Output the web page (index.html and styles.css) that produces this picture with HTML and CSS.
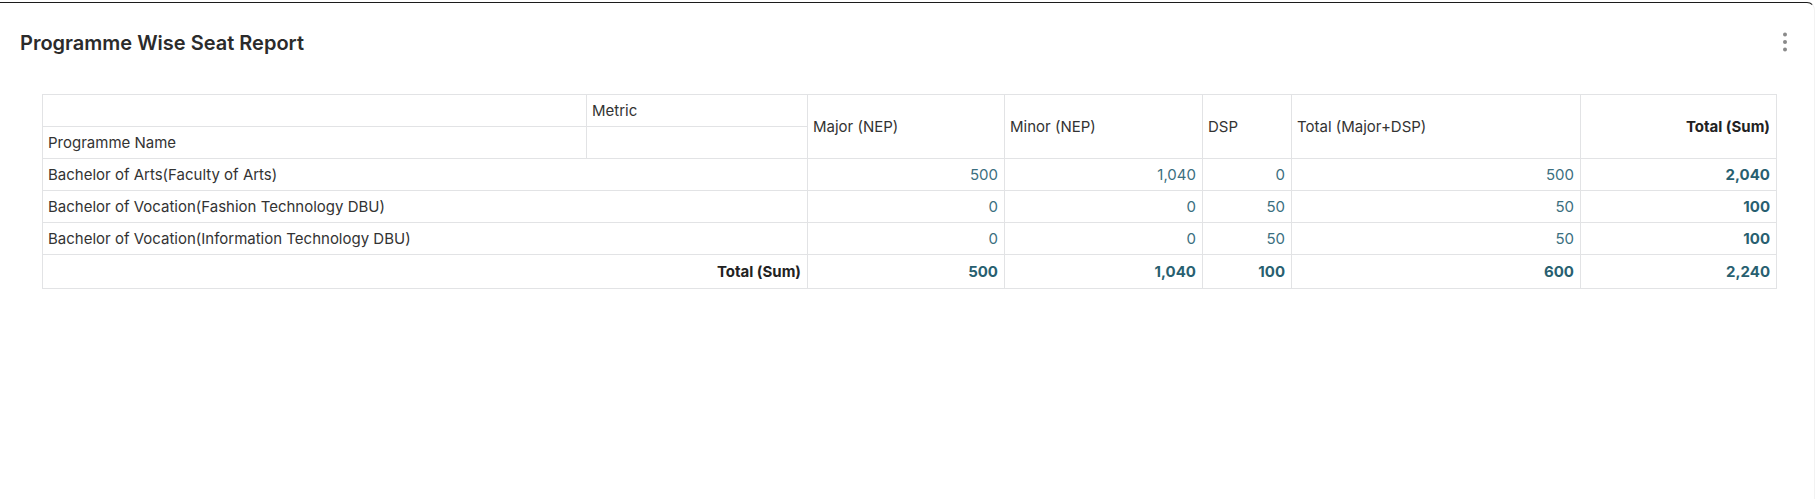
FILE: index.html
```html
<!DOCTYPE html>
<html lang="en">
<head>
<meta charset="utf-8">
<title>Programme Wise Seat Report</title>
<link rel="stylesheet" href="styles.css">
</head>
<body>
<div class="card">
  <div class="card-header">
    <h2 class="card-title">Programme Wise Seat Report</h2>
    <button class="menu-btn" aria-label="More options">
      <svg width="6" height="20" viewBox="0 0 6 20"><circle cx="3" cy="2.5" r="2" fill="#8a8a8a"/><circle cx="3" cy="10" r="2" fill="#8a8a8a"/><circle cx="3" cy="17.5" r="2" fill="#8a8a8a"/></svg>
    </button>
  </div>
  <div class="table-wrap">
    <table class="pivot">
      <colgroup>
        <col class="c-name"><col class="c-metric"><col class="c-major"><col class="c-minor"><col class="c-dsp"><col class="c-tmd"><col class="c-sum">
      </colgroup>
      <thead>
        <tr class="hrow">
          <th class="blank"></th>
          <th class="lbl">Metric</th>
          <th class="lbl" rowspan="2">Major (NEP)</th>
          <th class="lbl" rowspan="2">Minor (NEP)</th>
          <th class="lbl" rowspan="2">DSP</th>
          <th class="lbl" rowspan="2">Total (Major+DSP)</th>
          <th class="lbl sum-head" rowspan="2">Total (Sum)</th>
        </tr>
        <tr class="hrow">
          <th class="lbl">Programme Name</th>
          <th class="blank"></th>
        </tr>
      </thead>
      <tbody>
        <tr>
          <td class="name" colspan="2">Bachelor of Arts(Faculty of Arts)</td>
          <td class="num">500</td><td class="num">1,040</td><td class="num">0</td><td class="num">500</td><td class="num strong">2,040</td>
        </tr>
        <tr>
          <td class="name" colspan="2">Bachelor of Vocation(Fashion Technology DBU)</td>
          <td class="num">0</td><td class="num">0</td><td class="num">50</td><td class="num">50</td><td class="num strong">100</td>
        </tr>
        <tr>
          <td class="name" colspan="2">Bachelor of Vocation(Information Technology DBU)</td>
          <td class="num">0</td><td class="num">0</td><td class="num">50</td><td class="num">50</td><td class="num strong">100</td>
        </tr>
        <tr class="total-row">
          <td class="total-label" colspan="2">Total (Sum)</td>
          <td class="num strong">500</td><td class="num strong">1,040</td><td class="num strong">100</td><td class="num strong">600</td><td class="num strong">2,240</td>
        </tr>
      </tbody>
    </table>
  </div>
</div>
</body>
</html>
```

FILE: styles.css
```css
html, body {
  margin: 0;
  padding: 0;
  background: #ffffff;
}

body {
  font-family: Inter, "Noto Sans", "Liberation Sans", sans-serif;
  color: #333333;
}

.card {
  margin-top: 2px;
  height: 497px;
  box-sizing: border-box;
  border-top: 1px solid #1c1c1c;
  border-right: 1px solid #f2f2f2;
  border-top-right-radius: 8px;
}

.card-header {
  display: flex;
  align-items: center;
  justify-content: space-between;
  padding: 26px 26px 0 20px;
}

.card-title {
  margin: 0;
  font-size: 20px;
  line-height: 28px;
  font-weight: 600;
  color: #2b2b2b;
}

.menu-btn {
  border: 0;
  background: none;
  padding: 0;
  margin-top: -2px;
  display: flex;
  cursor: pointer;
}

.table-wrap {
  margin: 37px 39px 0 42px;
}

.pivot {
  width: 100%;
  table-layout: fixed;
  border-collapse: collapse;
  font-size: 15px;
  line-height: 18px;
}

.c-name { width: 544px; }
.c-metric { width: 221px; }
.c-major { width: 197px; }
.c-minor { width: 198px; }
.c-dsp { width: 89px; }
.c-tmd { width: 289px; }
.c-sum { width: 196px; }

.pivot th,
.pivot td {
  border: 1px solid #e2e3e5;
  padding: 0 6px 0 5px;
  height: 32px;
  box-sizing: border-box;
  vertical-align: middle;
  white-space: nowrap;
}

.pivot th {
  font-weight: 400;
  text-align: left;
  color: #333333;
}

.pivot th.sum-head {
  text-align: right;
  font-weight: 700;
  color: #222222;
}

.pivot td.name {
  text-align: left;
  color: #333333;
}

.pivot td.num {
  text-align: right;
  color: #3b6f80;
}

.pivot td.strong {
  font-weight: 700;
  color: #285f70;
}

.pivot td.total-label {
  text-align: right;
  font-weight: 700;
  color: #222222;
}

.pivot .total-row td {
  height: 34px;
}
```
